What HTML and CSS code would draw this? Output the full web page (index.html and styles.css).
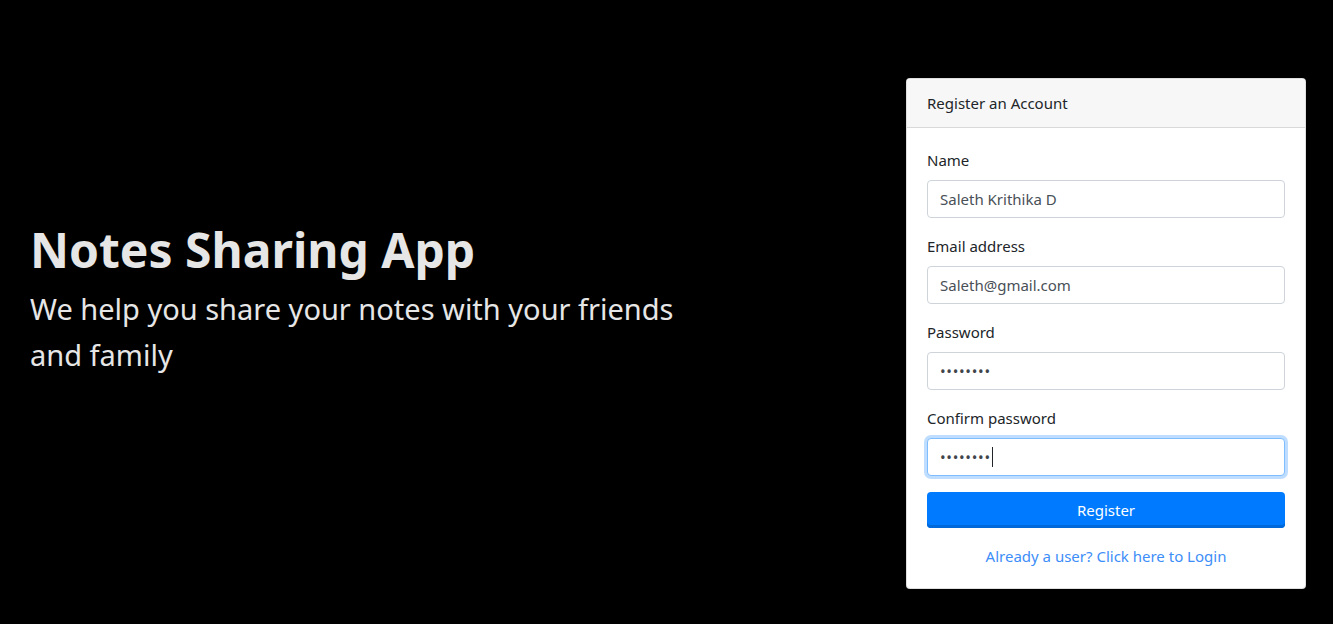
FILE: index.html
```html
<!DOCTYPE html>
<html lang="en">
<head>
<meta charset="utf-8">
<title>Notes Sharing App - Register</title>
<link rel="stylesheet" href="styles.css">
</head>
<body>
<main class="page">
  <section class="hero">
    <h1 class="hero-title">Notes Sharing App</h1>
    <p class="hero-sub">We help you share your notes with your friends and family</p>
  </section>
  <section class="card">
    <div class="card-header">Register an Account</div>
    <form class="card-body">
      <div class="form-group">
        <label class="label" for="name">Name</label>
        <input class="input" id="name" type="text" value="Saleth Krithika D">
      </div>
      <div class="form-group">
        <label class="label" for="email">Email address</label>
        <input class="input" id="email" type="email" value="Saleth@gmail.com">
      </div>
      <div class="form-group">
        <label class="label" for="pw">Password</label>
        <input class="input input-pw" id="pw" type="password" value="12345678">
      </div>
      <div class="form-group">
        <label class="label" for="pw2">Confirm password</label>
        <div class="field-wrap">
          <input class="input input-pw input-focus" id="pw2" type="password" value="12345678">
          <span class="caret"></span>
        </div>
      </div>
      <button class="btn" type="button">Register</button>
      <a class="login-link" href="#">Already a user? Click here to Login</a>
    </form>
  </section>
</main>
</body>
</html>
```
FILE: styles.css
```css
* { box-sizing: border-box; }
html, body { margin: 0; padding: 0; }
body {
  background: #000;
  font-family: "Noto Sans", "Open Sans", sans-serif;
  color: #212529;
  height: 624px;
  overflow: hidden;
}
.page {
  display: flex;
  justify-content: space-between;
  align-items: flex-start;
  padding: 78px 27px 0 30px;
}
.hero {
  width: 680px;
  margin-top: 144px;
  color: #e6e6e6;
}
.hero-title {
  margin: 0;
  font-size: 48px;
  font-weight: 700;
  line-height: 56px;
}
.hero-sub {
  margin: 8px 0 0;
  font-size: 29px;
  line-height: 46px;
  font-weight: 400;
}
.card {
  width: 400px;
  background: #fff;
  border: 1px solid rgba(0,0,0,.125);
  border-radius: 4px;
  overflow: hidden;
}
.card-header {
  background: #f7f7f7;
  border-bottom: 1px solid #d9d9d9;
  padding: 12px 20px;
  font-size: 15px;
  line-height: 24px;
}
.card-body {
  display: flex;
  flex-direction: column;
  padding: 20px;
  margin: 0;
}
.form-group {
  display: flex;
  flex-direction: column;
  margin-bottom: 16px;
}
.label {
  font-size: 15px;
  line-height: 24px;
  margin-bottom: 8px;
}
.field-wrap {
  position: relative;
  display: flex;
  flex-direction: column;
}
.input {
  height: 38px;
  padding: 6px 12px;
  font-family: inherit;
  font-size: 15px;
  color: #495057;
  background: #fff;
  border: 1px solid #ced4da;
  border-radius: 4px;
  outline: none;
}
.input-pw {
  letter-spacing: 0.7px;
  color: #3f454b;
}
.input-focus {
  border-color: #80bdff;
  box-shadow: 0 0 0 3px rgba(0,123,255,.25);
}
.caret {
  position: absolute;
  left: 65px;
  top: 9px;
  width: 1px;
  height: 20px;
  background: #212529;
}
.btn {
  height: 36px;
  border: 0;
  border-radius: 4px;
  background: #007bff;
  box-shadow: inset 0 -3px 0 #0069d9;
  color: #fff;
  font-family: inherit;
  font-size: 15px;
  cursor: pointer;
}
.login-link {
  margin-top: 16px;
  text-align: center;
  color: #3d8ef8;
  font-size: 15px;
  line-height: 24px;
  text-decoration: none;
}
```
